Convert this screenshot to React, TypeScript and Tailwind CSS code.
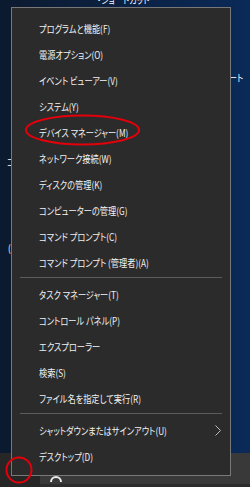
import React from 'react';

type Entry = { label: string } | { sep: true };

const entries: Entry[] = [
    { label: 'プログラムと機能(F)' },
    { label: '電源オプション(O)' },
    { label: 'イベント ビューアー(V)' },
    { label: 'システム(Y)' },
    { label: 'デバイス マネージャー(M)' },
    { label: 'ネットワーク接続(W)' },
    { label: 'ディスクの管理(K)' },
    { label: 'コンピューターの管理(G)' },
    { label: 'コマンド プロンプト(C)' },
    { label: 'コマンド プロンプト (管理者)(A)' },
    { sep: true },
    { label: 'タスク マネージャー(T)' },
    { label: 'コントロール パネル(P)' },
    { label: 'エクスプローラー' },
    { label: '検索(S)' },
    { label: 'ファイル名を指定して実行(R)' },
    { sep: true },
    { label: 'シャットダウンまたはサインアウト(U)' },
    { label: 'デスクトップ(D)' },
];

const font = "[font-family:'Noto_Sans_CJK_JP','Noto_Sans',sans-serif] [font-feature-settings:'palt']";
// Noto's kana are wider than the Meiryo UI in the shot, so squeeze horizontally
const narrow = 'inline-block origin-left scale-x-[0.82]';
const narrowR = 'inline-block origin-right scale-x-[0.82]';

export default function App() {
    return (
        <div className={`relative w-[250px] h-[487px] overflow-hidden ${font}`}>
            {/* desktop + taskbar */}
            <div className="flex flex-col h-full">
                <div className="relative flex-1 bg-gradient-to-r from-[#0c1a2f] via-[#0b2143] to-[#0a2a58] text-[10px] text-white leading-none whitespace-nowrap">
                    {/* desktop icon labels, mostly hidden behind the menu */}
                    <span className={`absolute left-[97px] top-[-5px] ${narrow}`}>・ショートカット</span>
                    <span className="absolute right-[7px] top-[73px]">
                        <span className={narrowR}>アップデート</span>
                    </span>
                    <span className={`absolute left-[7px] top-[157px] ${narrow}`}>コ</span>
                    <span className={`absolute left-[8px] top-[243px] ${narrow}`}>(</span>
                </div>
                <div className="flex h-[34px]">
                    <div className="w-[40px] bg-[#262626]" />
                    <div className="relative flex-1 bg-[#393939] border-b-[3px] border-[#2c2c2c]">
                        <div className="absolute left-[10px] top-[23px] w-[12px] h-[6px] rounded-t-full border-t-[2px] border-x-[2px] border-white/90" />
                    </div>
                </div>
            </div>

            {/* context menu */}
            <div className="absolute left-[11px] top-[7px] w-[220px] bg-[#2b2b2b] border border-[#787878] pt-[7px] pb-[6px] text-[10px] text-[#f2f2f2]">
                {entries.map((e, i) =>
                    'sep' in e ? (
                        <div key={i} className="h-[6px] pt-[2px] px-[8px]">
                            <div className="h-px bg-[#5c5c5c]" />
                        </div>
                    ) : (
                        <div key={i} className="h-[26px] flex items-center justify-between pl-[27px] pr-[9px] whitespace-nowrap">
                            <span className={narrow}>{e.label}</span>
                            {e.label.startsWith('シャットダウン') && (
                                <svg width="6" height="11" viewBox="0 0 6 11">
                                    <polyline points="0.5,0.5 5.5,5.5 0.5,10.5" fill="none" stroke="#bdbdbd" strokeWidth="1" />
                                </svg>
                            )}
                        </div>
                    )
                )}
            </div>

            {/* red annotations */}
            <svg className="absolute left-0 top-0 pointer-events-none" width="250" height="487">
                <ellipse cx="82.5" cy="130" rx="56.5" ry="14.5" fill="none" stroke="#e3000b" strokeWidth="2" />
                <circle cx="19" cy="470" r="12.5" fill="none" stroke="#e3000b" strokeWidth="2" />
            </svg>
        </div>
    );
}
